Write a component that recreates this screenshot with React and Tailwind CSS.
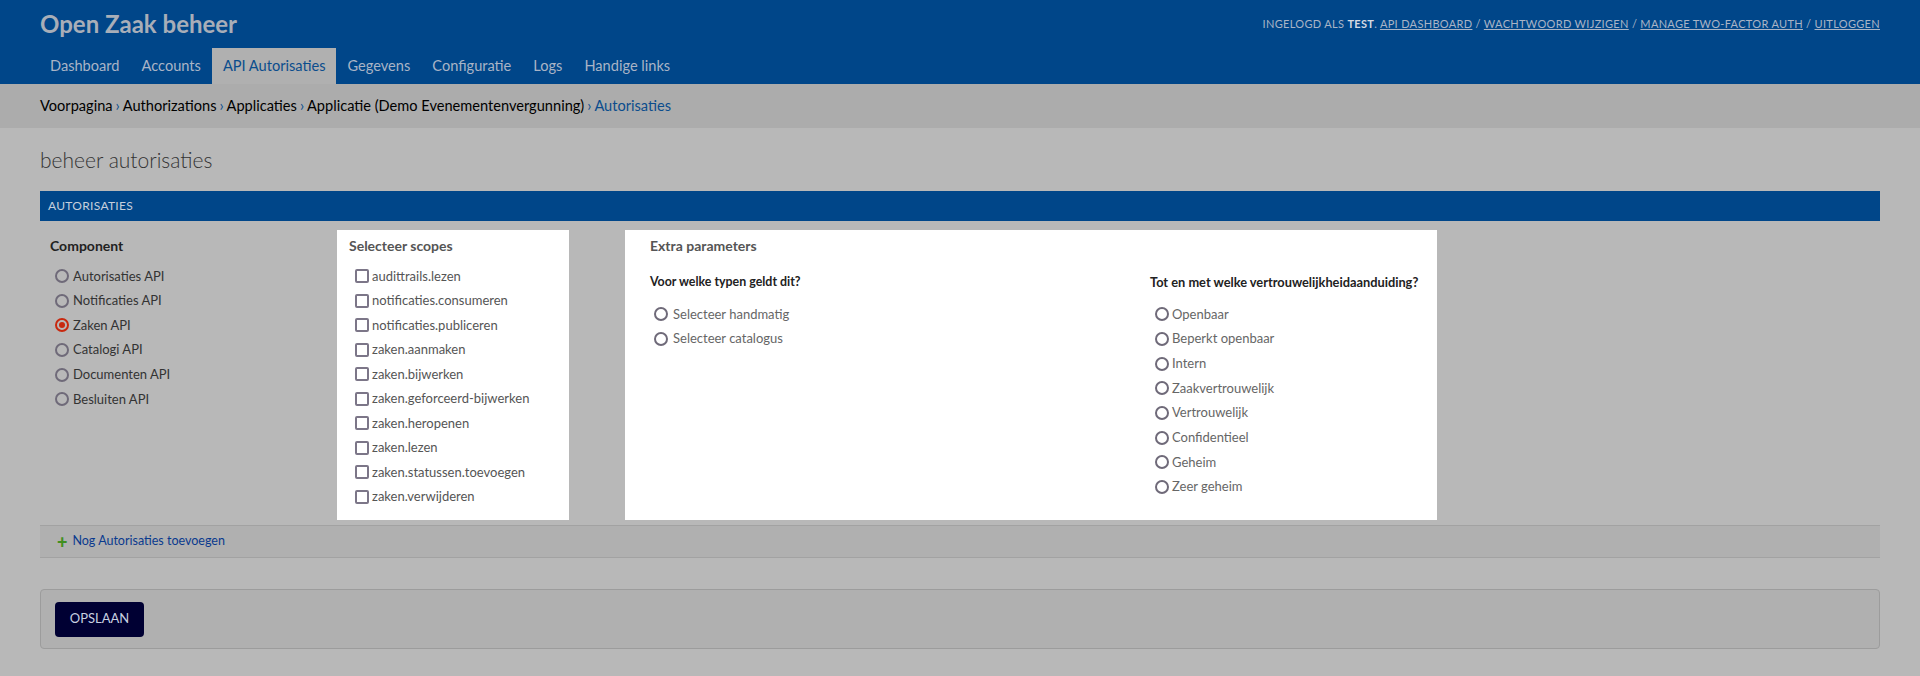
import React from "react";

const font = { fontFamily: "Lato, 'Open Sans', sans-serif" };

const components = [
  { label: "Autorisaties API" },
  { label: "Notificaties API" },
  { label: "Zaken API", checked: true },
  { label: "Catalogi API" },
  { label: "Documenten API" },
  { label: "Besluiten API" },
];

const scopes = [
  "audittrails.lezen",
  "notificaties.consumeren",
  "notificaties.publiceren",
  "zaken.aanmaken",
  "zaken.bijwerken",
  "zaken.geforceerd-bijwerken",
  "zaken.heropenen",
  "zaken.lezen",
  "zaken.statussen.toevoegen",
  "zaken.verwijderen",
];

const levels = [
  "Openbaar",
  "Beperkt openbaar",
  "Intern",
  "Zaakvertrouwelijk",
  "Vertrouwelijk",
  "Confidentieel",
  "Geheim",
  "Zeer geheim",
];

function Radio({ checked }) {
  return (
    <span
      className={
        "w-[14px] h-[14px] rounded-full border-2 flex items-center justify-center shrink-0 " +
        (checked ? "border-[#c8280f]" : "border-[#6f6a79]")
      }
    >
      {checked && <span className="w-[6px] h-[6px] rounded-full bg-[#c8280f]" />}
    </span>
  );
}

function Checkbox() {
  return <span className="w-[14px] h-[14px] rounded-[2px] border-2 border-[#7c7688] shrink-0" />;
}

const navItems = ["Dashboard", "Accounts", "API Autorisaties", "Gegevens", "Configuratie", "Logs", "Handige links"];

export default function App() {
  return (
    <div className="min-h-screen bg-[#b8b8b8]" style={font}>
      {/* header */}
      <header className="bg-[#004689] h-[84px] flex flex-col">
        <div className="h-[48px] flex items-center justify-between pl-[40px] pr-[40px]">
          <h1 className="text-[24px] font-bold text-[#a8aeb8] leading-none">Open Zaak beheer</h1>
          <div className="text-[11px] uppercase tracking-[0.32px] text-[#a9b4c6]">
            Ingelogd als <strong className="font-bold text-[#d6dbe3]">test</strong>.{" "}
            <a className="underline">API dashboard</a> / <a className="underline">Wachtwoord wijzigen</a> /{" "}
            <a className="underline">Manage two-factor auth</a> / <a className="underline">Uitloggen</a>
          </div>
        </div>
        <nav className="flex h-[36px] pl-[39px]">
          {navItems.map((item) => (
            <a
              key={item}
              className={
                "px-[11px] flex items-center text-[14.6px] " +
                (item === "API Autorisaties" ? "bg-[#b0b0b0] text-[#0b4d8d]" : "text-[#a9b4c6]")
              }
            >
              {item}
            </a>
          ))}
        </nav>
      </header>

      {/* breadcrumbs */}
      <div className="h-[44px] bg-[#acacac] flex items-center px-[40px] text-[14.6px] text-black">
        Voorpagina <span className="text-[#0b4d8d] mx-[3px]">›</span> Authorizations{" "}
        <span className="text-[#0b4d8d] mx-[3px]">›</span> Applicaties{" "}
        <span className="text-[#0b4d8d] mx-[3px]">›</span> Applicatie (Demo Evenementenvergunning){" "}
        <span className="text-[#0b4d8d] mx-[3px]">›</span>
        <span className="text-[#0b4d8d]">Autorisaties</span>
      </div>

      <main className="px-[40px]">
        <h2 className="h-[63px] flex items-center text-[21px] font-light text-[#333]">beheer autorisaties</h2>

        <div className="h-[30px] bg-[#004689] flex items-center pl-[8px] text-[12px] uppercase text-[#c6cfdc] tracking-[0.3px]">
          Autorisaties
        </div>

        <div className="flex mt-[9px] h-[290px]">
          {/* component */}
          <div className="w-[297px] pl-[10px] pt-[5px]">
            <div className="h-[20px] flex items-center text-[14px] font-bold text-[#222]">Component</div>
            <div className="mt-[9px] pl-[5px] flex flex-col">
              {components.map((c) => (
                <label key={c.label} className="h-[24.6px] flex items-center gap-[4px] text-[13px] text-[#333]">
                  <Radio checked={c.checked} />
                  {c.label}
                </label>
              ))}
            </div>
          </div>

          {/* scopes */}
          <div className="w-[232px] bg-white pl-[12px] pt-[5px]">
            <div className="h-[20px] flex items-center text-[14px] font-bold text-[#555]">Selecteer scopes</div>
            <div className="mt-[9px] pl-[6px] flex flex-col">
              {scopes.map((s) => (
                <label key={s} className="h-[24.5px] flex items-center gap-[3px] text-[13px] text-[#555]">
                  <Checkbox />
                  {s}
                </label>
              ))}
            </div>
          </div>

          {/* extra parameters */}
          <div className="ml-[56px] w-[812px] bg-white pl-[25px] pt-[5px]">
            <div className="h-[20px] flex items-center text-[14px] font-bold text-[#555]">Extra parameters</div>
            <div className="flex">
              <div className="w-[500px]">
                <div className="mt-[17px] h-[20px] flex items-center text-[12.4px] font-bold text-[#222]">
                  Voor welke typen geldt dit?
                </div>
                <div className="mt-[10px] pl-[4px] flex flex-col">
                  {["Selecteer handmatig", "Selecteer catalogus"].map((r) => (
                    <label key={r} className="h-[24.5px] flex items-center gap-[5px] text-[13px] text-[#666]">
                      <Radio />
                      {r}
                    </label>
                  ))}
                </div>
              </div>
              <div>
                <div className="mt-[18px] h-[20px] flex items-center text-[12.8px] font-bold text-[#222]">
                  Tot en met welke vertrouwelijkheidaanduiding?
                </div>
                <div className="mt-[9px] pl-[5px] flex flex-col">
                  {levels.map((l) => (
                    <label key={l} className="h-[24.7px] flex items-center gap-[3px] text-[13px] text-[#666]">
                      <Radio />
                      {l}
                    </label>
                  ))}
                </div>
              </div>
            </div>
          </div>
        </div>

        {/* add row */}
        <div className="mt-[5px] h-[33px] bg-[#b0b0b0] border-y border-[#a2a2a2] flex items-center pl-[17px] gap-[5px]">
          <span className="text-[#3f8f1f] text-[18px] font-black leading-none">+</span>
          <a className="text-[12.5px] text-[#0a3a8e]">Nog Autorisaties toevoegen</a>
        </div>

        {/* submit */}
        <div className="mt-[31px] h-[60px] bg-[#b0b0b0] border border-[#9c9c9c] rounded-[4px] flex items-center pl-[14px]">
          <button className="h-[35px] w-[89px] rounded-[4px] bg-[#000033] text-[#c8d0e0] text-[13px] uppercase">
            Opslaan
          </button>
        </div>
      </main>
    </div>
  );
}
